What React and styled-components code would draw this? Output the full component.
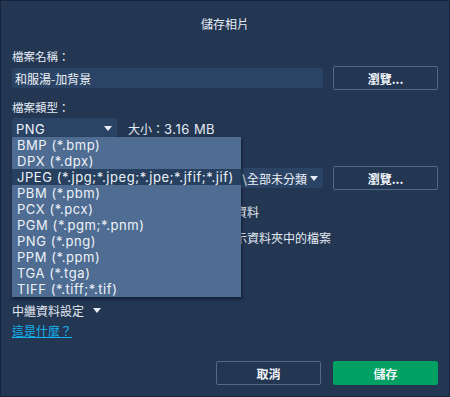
import React from "react";
import styled, { createGlobalStyle } from "styled-components";

const Global = createGlobalStyle`
  html, body { margin: 0; padding: 0; background: #233652; }
  * { box-sizing: border-box; }
  body { font-family: "Noto Sans CJK TC", "Noto Sans", sans-serif; color: #e4ebf4; }
`;

const Dialog = styled.div`
  position: relative;
  width: 450px;
  height: 397px;
  border: 1px solid #16233a;
  background: #233652;
  padding: 0 11px 11px;
  display: flex;
  flex-direction: column;
  font-size: 12px;
`;

const Title = styled.div`
  height: 46px;
  line-height: 46px;
  text-align: center;
  font-size: 12px;
  color: #e8eef6;
`;

const Label = styled.div`
  height: 16px;
  line-height: 16px;
  font-size: 11.5px;
  margin-top: ${(p) => p.$mt || 0}px;
`;

/* part of the form that lies under the open drop-down list */
const Occluded = styled.span`
  visibility: hidden;
  flex: none;
`;

const Row = styled.div`
  display: flex;
  align-items: center;
  gap: ${(p) => p.$gap || 10}px;
  margin-top: ${(p) => p.$mt || 0}px;
  height: ${(p) => p.$h || 24}px;
`;

const Field = styled.div`
  width: ${(p) => p.$w}px;
  height: 20px;
  background: #2b4465;
  border-radius: 2px;
  display: flex;
  align-items: center;
  justify-content: ${(p) => (p.$end ? "flex-end" : "flex-start")};
  padding: 0 ${(p) => p.$pr || 4}px 0 ${(p) => p.$pl || 3}px;
  font-size: 12px;
  color: #eef3f9;
  white-space: nowrap;
  overflow: hidden;
`;

const FieldText = styled.span`
  flex: ${(p) => (p.$grow ? 1 : "none")};
`;

const Latin = styled.span`
  font-family: Inter, "Noto Sans", sans-serif;
  font-size: 13px;
  letter-spacing: 0.5px;
`;

const Arrow = styled.span`
  width: 0;
  height: 0;
  border-left: 4px solid transparent;
  border-right: 4px solid transparent;
  border-top: 5px solid #e6ecf4;
  margin-left: ${(p) => p.$ml || 0}px;
  flex: none;
`;

const Button = styled.div`
  width: 105px;
  height: 24px;
  border-radius: 2px;
  border: 1px solid ${(p) => (p.$primary ? "#00a162" : "#52698a")};
  background: ${(p) => (p.$primary ? "#00a162" : "transparent")};
  display: flex;
  align-items: center;
  justify-content: center;
  font-size: 12px;
  font-weight: 700;
  color: #f2f6fb;
  flex: none;
`;

const SizeText = styled.span`
  font-size: 12px;
  color: #e4ebf4;
  white-space: nowrap;
`;

const SelectWrap = styled.div`
  position: relative;
`;

const Menu = styled.div`
  position: absolute;
  left: 0;
  top: 19px;
  width: 229px;
  background: #4f6c92;
  box-shadow: 1px 2px 3px rgba(5, 12, 25, 0.55);
  z-index: 5;
`;

const MenuItem = styled.div`
  height: 16px;
  line-height: 16px;
  padding-left: 5px;
  font-family: Inter, "Noto Sans", sans-serif;
  font-size: 13px;
  letter-spacing: 0.55px;
  white-space: nowrap;
  color: #eef3f9;
  background: ${(p) => (p.$active ? "#27405f" : "transparent")};
`;

const CheckRow = styled.div`
  display: flex;
  align-items: center;
  height: 16px;
  margin-top: ${(p) => p.$mt || 0}px;
  font-size: 12px;
  white-space: nowrap;
`;

const Box = styled.span`
  width: 13px;
  height: 13px;
  margin-right: 6px;
  border: 1px solid #8fa3bd;
  border-radius: 2px;
  flex: none;
  visibility: hidden;
`;

const Expander = styled.div`
  display: flex;
  align-items: center;
  gap: 9px;
  height: 16px;
  margin-top: ${(p) => p.$mt || 0}px;
  font-size: 12px;
`;

const Link = styled.a`
  display: block;
  width: max-content;
  height: 16px;
  line-height: 16px;
  margin-top: 5px;
  font-size: 12px;
  color: #16b2ee;
  text-decoration: underline;
`;

const Footer = styled.div`
  margin-top: auto;
  display: flex;
  justify-content: flex-end;
  gap: 12px;
`;

const formats = [
  "BMP (*.bmp)",
  "DPX (*.dpx)",
  "JPEG (*.jpg;*.jpeg;*.jpe;*.jfif;*.jif)",
  "PBM (*.pbm)",
  "PCX (*.pcx)",
  "PGM (*.pgm;*.pnm)",
  "PNG (*.png)",
  "PPM (*.ppm)",
  "TGA (*.tga)",
  "TIFF (*.tiff;*.tif)",
];

export default function App() {
  return (
    <>
      <Global />
      <Dialog>
        <Title>儲存相片</Title>
        <Label $mt={1}>檔案名稱：</Label>
        <Row $mt={2}>
          <Field $w={311}>
            <FieldText>和服湯-加背景</FieldText>
          </Field>
          <Button>瀏覽...</Button>
        </Row>
        <Label $mt={9}>檔案類型：</Label>
        <Row $mt={3} $h={20} $gap={11}>
          <SelectWrap>
            <Field $w={105} $pl={4} $pr={5}>
              <FieldText $grow>
                <Latin>PNG</Latin>
              </FieldText>
              <Arrow />
            </Field>
            <Menu>
              {formats.map((f, i) => (
                <MenuItem key={f} $active={i === 2}>
                  {f}
                </MenuItem>
              ))}
            </Menu>
          </SelectWrap>
          <SizeText>
            大小：<Latin>3.16 MB</Latin>
          </SizeText>
        </Row>
        <Label $mt={9}>
          <Occluded>儲存位置：</Occluded>
        </Label>
        <Row $mt={3}>
          <Field $w={311} $pr={5} $end>
            <FieldText>\全部未分類</FieldText>
            <Arrow $ml={3} />
          </Field>
          <Button>瀏覽...</Button>
        </Row>
        <CheckRow $mt={13}>
          <Box />
          <Occluded>儲存保留相片原始拍攝日期與相機中繼</Occluded>
          <span>資料</span>
        </CheckRow>
        <CheckRow $mt={10}>
          <Box />
          <Occluded>儲存完成後自動開啟檔案總管視窗並顯</Occluded>
          <span>示資料夾中的檔案</span>
        </CheckRow>
        <Expander $mt={57}>
          中繼資料設定
          <Arrow />
        </Expander>
        <Link>這是什麼？</Link>
        <Footer>
          <Button>取消</Button>
          <Button $primary>儲存</Button>
        </Footer>
      </Dialog>
    </>
  );
}
